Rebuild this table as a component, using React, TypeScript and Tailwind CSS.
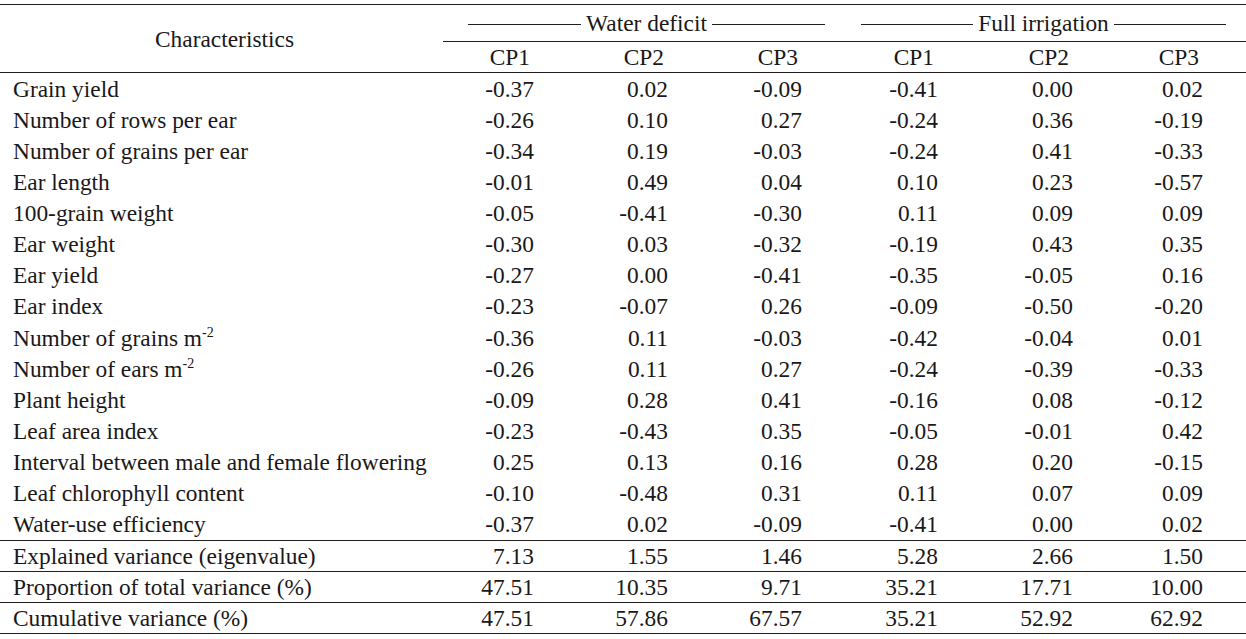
import React from "react";

type Row = { label: React.ReactNode; v: string[] };

const M2 = (base: string) => (
  <span>
    {base} m
    <sup className="text-[14px] relative top-[-9px]">-2</sup>
  </span>
);

const rows: Row[] = [
  { label: "Grain yield", v: ["-0.37", "0.02", "-0.09", "-0.41", "0.00", "0.02"] },
  { label: "Number of rows per ear", v: ["-0.26", "0.10", "0.27", "-0.24", "0.36", "-0.19"] },
  { label: "Number of grains per ear", v: ["-0.34", "0.19", "-0.03", "-0.24", "0.41", "-0.33"] },
  { label: "Ear length", v: ["-0.01", "0.49", "0.04", "0.10", "0.23", "-0.57"] },
  { label: "100-grain weight", v: ["-0.05", "-0.41", "-0.30", "0.11", "0.09", "0.09"] },
  { label: "Ear weight", v: ["-0.30", "0.03", "-0.32", "-0.19", "0.43", "0.35"] },
  { label: "Ear yield", v: ["-0.27", "0.00", "-0.41", "-0.35", "-0.05", "0.16"] },
  { label: "Ear index", v: ["-0.23", "-0.07", "0.26", "-0.09", "-0.50", "-0.20"] },
  { label: M2("Number of grains"), v: ["-0.36", "0.11", "-0.03", "-0.42", "-0.04", "0.01"] },
  { label: M2("Number of ears"), v: ["-0.26", "0.11", "0.27", "-0.24", "-0.39", "-0.33"] },
  { label: "Plant height", v: ["-0.09", "0.28", "0.41", "-0.16", "0.08", "-0.12"] },
  { label: "Leaf area index", v: ["-0.23", "-0.43", "0.35", "-0.05", "-0.01", "0.42"] },
  { label: "Interval between male and female flowering", v: ["0.25", "0.13", "0.16", "0.28", "0.20", "-0.15"] },
  { label: "Leaf chlorophyll content", v: ["-0.10", "-0.48", "0.31", "0.11", "0.07", "0.09"] },
  { label: "Water-use efficiency", v: ["-0.37", "0.02", "-0.09", "-0.41", "0.00", "0.02"] },
];

const summary: Row[] = [
  { label: "Explained variance (eigenvalue)", v: ["7.13", "1.55", "1.46", "5.28", "2.66", "1.50"] },
  { label: "Proportion of total variance (%)", v: ["47.51", "10.35", "9.71", "35.21", "17.71", "10.00"] },
  { label: "Cumulative variance (%)", v: ["47.51", "57.86", "67.57", "35.21", "52.92", "62.92"] },
];

const GRID = "grid grid-cols-[443px_91px_134px_134px_136px_135px_130px_1fr]";

function DataRow({ row, h, border }: { row: Row; h: string; border?: boolean }) {
  return (
    <div className={`${GRID} ${h} ${border ? "border-t border-[#231f20]" : ""}`}>
      <div className="pl-[13px] flex items-center whitespace-nowrap">{row.label}</div>
      {row.v.map((x, i) => (
        <div key={i} className="flex items-center justify-end">
          {x}
        </div>
      ))}
      <div />
    </div>
  );
}

function Group({ title, w }: { title: string; w: string }) {
  return (
    <div className={`flex items-center ${w}`}>
      <div className="flex-1 h-px bg-[#231f20] mt-[2px]" />
      <span className="px-[5px]">{title}</span>
      <div className="flex-1 h-px bg-[#231f20] mt-[2px]" />
    </div>
  );
}

export default function App() {
  return (
    <div
      className="w-[1246px] h-[639px] bg-white text-[#1a1819] text-[23.4px] leading-[26px] pt-[4px]"
      style={{ fontFamily: '"Liberation Serif", "Times New Roman", serif' }}
    >
      {/* header */}
      <div className="flex border-t border-b border-[#231f20]">
        <div className="w-[443px] flex items-center justify-center pl-[6px]">Characteristics</div>
        <div className="flex-1 flex flex-col">
          <div className="h-[37px] border-b border-[#231f20] flex items-center pl-[25px] gap-[36px]">
            <Group title="Water deficit" w="w-[357px]" />
            <Group title="Full irrigation" w="w-[365px]" />
          </div>
          <div className="grid grid-cols-[91px_134px_134px_136px_135px_130px_1fr] h-[30px]">
            {["CP1", "CP2", "CP3", "CP1", "CP2", "CP3"].map((c, i) => (
              <div key={i} className="flex items-center justify-end pr-[4px]">
                {c}
              </div>
            ))}
            <div />
          </div>
        </div>
      </div>
      {/* body */}
      <div className="flex flex-col">
        {rows.map((r, i) => (
          <DataRow key={i} row={r} h="h-[31.13px]" />
        ))}
      </div>
      <div className="flex flex-col border-b border-[#231f20]">
        {summary.map((r, i) => (
          <DataRow key={i} row={r} h="h-[31px]" border />
        ))}
      </div>
    </div>
  );
}
